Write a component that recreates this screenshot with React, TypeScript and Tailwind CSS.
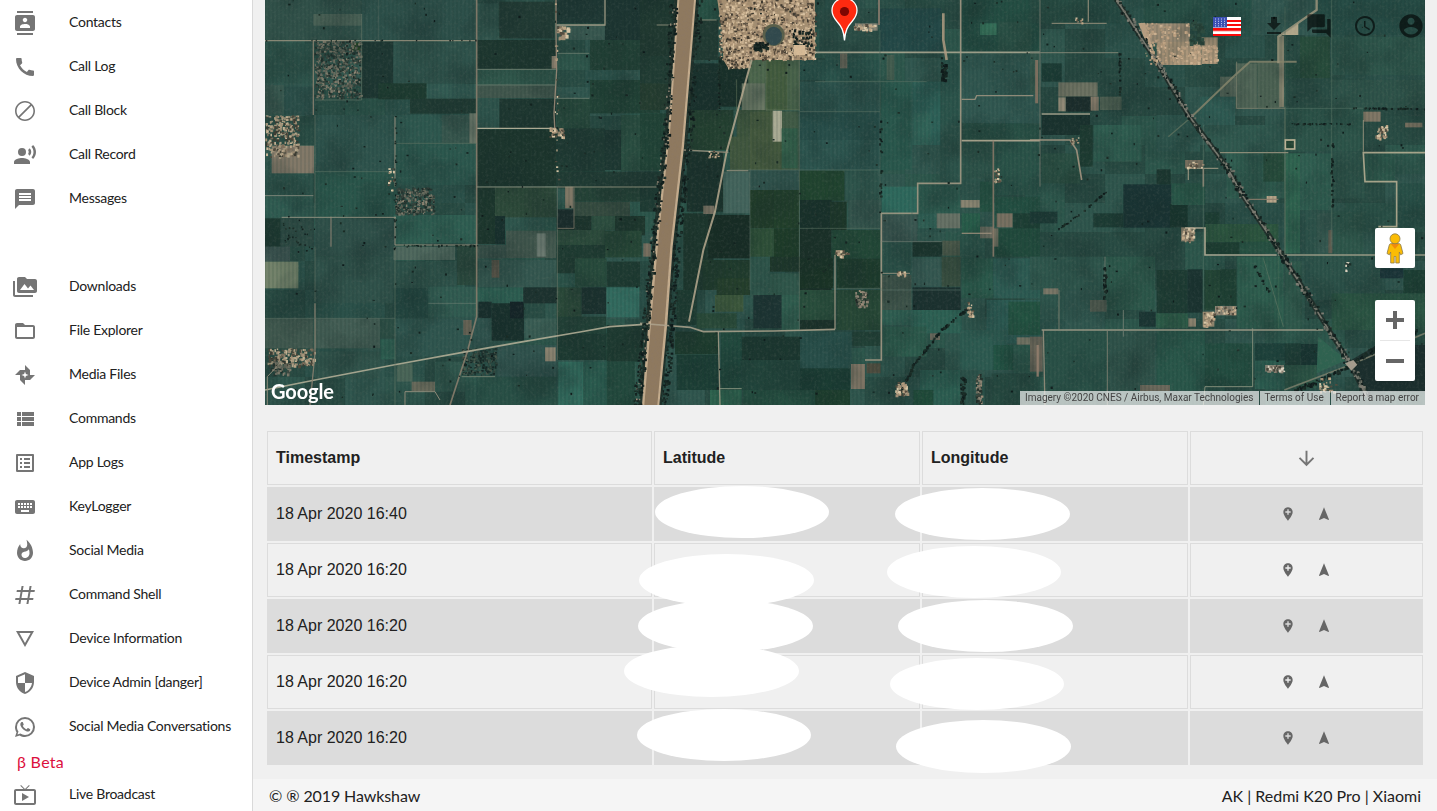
import React from "react";

const ICONS: Record<string, string> = {
  contacts:
    "M20 0H4v2h16V0zM4 24h16v-2H4v2zM20 4H4c-1.1 0-2 .9-2 2v12c0 1.1.9 2 2 2h16c1.1 0 2-.9 2-2V6c0-1.1-.9-2-2-2zm-8 2.75c1.24 0 2.25 1.01 2.25 2.25s-1.01 2.25-2.25 2.25S9.75 10.24 9.75 9 10.76 6.75 12 6.75zM17 17H7v-1.5c0-1.67 3.33-2.5 5-2.5s5 .83 5 2.5V17z",
  call: "M20.01 15.38c-1.23 0-2.42-.2-3.53-.56-.35-.12-.74-.03-1.01.24l-1.57 1.97c-2.83-1.35-5.48-3.9-6.89-6.83l1.95-1.66c.27-.28.35-.67.24-1.02-.37-1.11-.56-2.3-.56-3.53 0-.54-.45-.99-.99-.99H4.19C3.65 3 3 3.24 3 3.99 3 13.28 10.73 21 20.01 21c.71 0 .99-.63.99-1.18v-3.45c0-.54-.45-.99-.99-.99z",
  block:
    "M12 2C6.5 2 2 6.5 2 12s4.5 10 10 10 10-4.5 10-10S17.5 2 12 2zM3.6 12c0-4.6 3.8-8.4 8.4-8.4 2 0 3.9.7 5.3 1.9L5.5 17.3C4.3 15.9 3.6 14 3.6 12zm8.4 8.4c-2 0-3.900-.7-5.300-1.9L18.500 6.700c1.200 1.400 1.900 3.300 1.900 5.300 0 4.600-3.800 8.400-8.400 8.400z",
  voice:
    "M9 5a4 4 0 1 0 0 8 4 4 0 0 0 0-8zM9 15c-2.670 0-8 1.340-8 4v2h16v-2c0-2.660-5.330-4-8-4zm7.760-9.640l-1.680 1.690c.84 1.180.84 2.710 0 3.890l1.680 1.690c2.020-2.020 2.020-5.070 0-7.270zM20.070 2l-1.630 1.630c2.770 3.020 2.770 7.560 0 10.740L20.070 16c3.900-3.890 3.910-9.950 0-14z",
  message:
    "M20 2H4c-1.100 0-1.990.9-1.990 2L2 22l4-4h14c1.100 0 2-.9 2-2V4c0-1.100-.9-2-2-2zm-2 12H6v-2h12v2zm0-3H6V9h12v2zm0-3H6V6h12v2z",
  media:
    "M2 6H0v5h.01L0 20c0 1.100.9 2 2 2h18v-2H2V6zm20-2h-8l-2-2H6c-1.100 0-1.990.9-1.990 2L4 16c0 1.100.9 2 2 2h16c1.100 0 2-.9 2-2V6c0-1.100-.9-2-2-2zM7 15l4.500-6 3.500 4.510 2.500-3.010L21 15H7z",
  folder:
    "M20 6h-8l-2-2H4c-1.100 0-1.990.9-1.990 2L2 18c0 1.100.9 2 2 2h16c1.100 0 2-.9 2-2V8c0-1.100-.9-2-2-2zm0 12H4V8h16v10z",
  pinwheel:
    "M17 12V7L12 2V7H7L2 12H7V17L12 22V17H17L22 12H17M12.880 12.880L12 15.530L11.120 12.880L8.470 12L11.120 11.120L12 8.460L12.880 11.110L15.530 12L12.880 12.880Z",
  list: "M4 14h4v-4H4v4zm0 5h4v-4H4v4zM4 9h4V5H4v4zm5 5h12v-4H9v4zm0 5h12v-4H9v4zM9 5v4h12V5H9z",
  logs: "M19 5v14H5V5h14m1.100-2H3.900c-.5 0-.9.4-.9.9v16.200c0 .4.4.9.9.9h16.200c.4 0 .9-.5.9-.9V3.900c0-.5-.5-.9-.9-.9zM11 7h6v2h-6V7zm0 4h6v2h-6v-2zm0 4h6v2h-6zM7 7h2v2H7zm0 4h2v2H7zm0 4h2v2H7z",
  keyboard:
    "M20 5H4c-1.100 0-1.990.9-1.990 2L2 17c0 1.100.9 2 2 2h16c1.100 0 2-.9 2-2V7c0-1.100-.9-2-2-2zm-9 3h2v2h-2V8zm0 3h2v2h-2v-2zM8 8h2v2H8V8zm0 3h2v2H8v-2zm-1 2H5v-2h2v2zm0-3H5V8h2v2zm9 7H8v-2h8v2zm0-4h-2v-2h2v2zm0-3h-2V8h2v2zm3 3h-2v-2h2v2zm0-3h-2V8h2v2z",
  hot: "M13.500.67s.74 2.650.74 4.800c0 2.060-1.350 3.730-3.410 3.730-2.070 0-3.630-1.670-3.630-3.730l.03-.36C5.210 7.510 4 10.620 4 14c0 4.420 3.580 8 8 8s8-3.580 8-8C20 8.610 17.410 3.800 13.500.67zM11.710 19c-1.780 0-3.220-1.400-3.220-3.140 0-1.620 1.050-2.760 2.810-3.120 1.770-.36 3.600-1.210 4.620-2.580.39 1.290.59 2.650.59 4.040 0 2.650-2.150 4.800-4.800 4.800z",
  hash: "M5.410 21L6.120 17H2.120L2.470 15H6.470L7.530 9H3.530L3.880 7H7.880L8.590 3H10.590L9.880 7H15.880L16.590 3H18.590L17.880 7H21.880L21.530 9H17.530L16.470 15H20.470L20.120 17H16.120L15.410 21H13.410L14.120 17H8.120L7.410 21H5.410M9.530 9L8.470 15H14.470L15.530 9H9.530Z",
  details: "M3 4l9 16 9-16H3zm3.380 2h11.250L12 16 6.380 6z",
  shield:
    "M12 1L3 5v6c0 5.550 3.840 10.740 9 12 5.160-1.260 9-6.450 9-12V5l-9-4zm0 10.990h7c-.53 4.120-3.280 7.790-7 8.940V12H5V6.300l7-3.110v8.800z",
  whatsapp:
    "M16.750 13.960C17 14.090 17.160 14.160 17.210 14.260C17.270 14.370 17.250 14.870 17 15.440C16.800 16 15.760 16.540 15.300 16.560C14.840 16.580 14.830 16.920 12.340 15.830C9.850 14.740 8.350 12.080 8.230 11.910C8.110 11.740 7.270 10.530 7.310 9.300C7.360 8.080 8 7.500 8.260 7.260C8.500 7 8.770 6.970 8.940 7H9.410C9.560 7 9.770 6.940 9.960 7.450L10.650 9.320C10.710 9.450 10.750 9.600 10.660 9.760L10.390 10.170L10 10.590C9.880 10.710 9.740 10.840 9.880 11.090C10 11.350 10.500 12.180 11.200 12.870C12.110 13.750 12.910 14.040 13.150 14.170C13.390 14.310 13.540 14.290 13.690 14.130L14.500 13.190C14.690 12.940 14.850 13 15.080 13.080L16.750 13.960M12 2A10 10 0 0 1 22 12A10 10 0 0 1 12 22C10.030 22 8.200 21.430 6.650 20.450L2 22L3.550 17.350C2.570 15.800 2 13.970 2 12A10 10 0 0 1 12 2M12 4A8 8 0 0 0 4 12C4 13.720 4.540 15.310 5.460 16.610L4.500 19.500L7.390 18.540C8.690 19.460 10.280 20 12 20A8 8 0 0 0 20 12A8 8 0 0 0 12 4Z",
  tv: "M21 6h-7.590l3.290-3.290L16 2l-4 4-4-4-.7.710L10.590 6H3c-1.100 0-2 .89-2 2v12c0 1.100.9 2 2 2h18c1.100 0 2-.9 2-2V8c0-1.110-.9-2-2-2zm0 14H3V8h18v12zM9 10v8l7-4z",
  download: "M19 9h-4V3H9v6H5l7 7 7-7zM5 18v2h14v-2H5z",
  forum:
    "M21 6h-2v9H6v2c0 .55.45 1 1 1h11l4 4V7c0-.55-.45-1-1-1zm-4 6V3c0-.55-.45-1-1-1H3c-.55 0-1 .45-1 1v14l4-4h10c.55 0 1-.45 1-1z",
  clock:
    "M11.990 2C6.470 2 2 6.480 2 12s4.470 10 9.990 10C17.520 22 22 17.520 22 12S17.520 2 11.990 2zM12 20c-4.420 0-8-3.580-8-8s3.580-8 8-8 8 3.580 8 8-3.580 8-8 8zM12.500 7H11v6l5.250 3.150.75-1.230-4.500-2.670z",
  account:
    "M12 2C6.480 2 2 6.480 2 12s4.480 10 10 10 10-4.480 10-10S17.520 2 12 2zm0 3c1.660 0 3 1.340 3 3s-1.340 3-3 3-3-1.340-3-3 1.340-3 3-3zm0 14.200c-2.500 0-4.710-1.280-6-3.220.03-1.990 4-3.080 6-3.080 1.990 0 5.970 1.090 6 3.080-1.290 1.940-3.500 3.220-6 3.220z",
  down: "M20 12l-1.410-1.410L13 16.170V4h-2v12.170l-5.580-5.590L4 12l8 8 8-8z",
  addLocation:
    "M12 2C8.140 2 5 5.140 5 9c0 5.250 7 13 7 13s7-7.750 7-13c0-3.860-3.140-7-7-7zm4 8h-3v3h-2v-3H8V8h3V5h2v3h3v2z",
  navigation: "M12 2L4.500 20.290l.71.71L12 18l6.790 3 .71-.71z",
};

function Icon({ name, className }: { name: string; className?: string }) {
  return (
    <svg viewBox="0 0 24 24" fill="currentColor" className={className ?? "size-6"}>
      <path d={ICONS[name]} />
    </svg>
  );
}

const NAV_TOP: [string, string][] = [
  ["contacts", "Contacts"],
  ["call", "Call Log"],
  ["block", "Call Block"],
  ["voice", "Call Record"],
  ["message", "Messages"],
];

const NAV_MAIN: [string, string][] = [
  ["media", "Downloads"],
  ["folder", "File Explorer"],
  ["pinwheel", "Media Files"],
  ["list", "Commands"],
  ["logs", "App Logs"],
  ["keyboard", "KeyLogger"],
  ["hot", "Social Media"],
  ["hash", "Command Shell"],
  ["details", "Device Information"],
  ["shield", "Device Admin [danger]"],
  ["whatsapp", "Social Media Conversations"],
];

function NavItem({ icon, label }: { icon: string; label: string }) {
  return (
    <a className="flex h-11 shrink-0 items-center pl-[13px] text-[#757575]">
      <Icon name={icon} />
      <span className="ml-8 whitespace-nowrap pb-0.5 text-sm tracking-[-0.26px] text-[#212121]">{label}</span>
    </a>
  );
}

function Sidebar() {
  return (
    <nav className="flex w-[253px] shrink-0 flex-col overflow-hidden border-r border-[#d9d9d9] bg-white pt-px">
      {NAV_TOP.map(([i, l]) => (
        <NavItem key={l} icon={i} label={l} />
      ))}
      <div className="h-11 shrink-0" />
      {NAV_MAIN.map(([i, l]) => (
        <NavItem key={l} icon={i} label={l} />
      ))}
      <div className="flex h-6 shrink-0 items-center pl-[17px] pt-0.5 text-base tracking-[0.3px] text-[#dc0f3c]">β Beta</div>
      <NavItem icon="tv" label="Live Broadcast" />
    </nav>
  );
}

/* ---------- satellite imagery ---------- */

function makeRandom(seed: number) {
  let s = seed;
  return () => {
    s = (s * 1664525 + 1013904223) % 4294967296;
    return s / 4294967296;
  };
}

type Patch = [number, number, number, number, string];

// Three survey sheets, each in its own 3x coordinate space.
const WEST: Patch[] = [
  [15, 0, 290, 120, "#2d5249"], [305, 0, 345, 120, "#28514b"], [650, 10, 65, 110, "#2e5a50"],
  [718, 5, 165, 110, "#1d3a31"], [885, 0, 150, 70, "#1a3631"], [1035, 0, 165, 190, "#17332e"],
  [160, 42, 145, 35, "#4c6657"], [305, 125, 95, 170, "#18352f"], [400, 125, 250, 125, "#2b564d"],
  [650, 120, 240, 88, "#19352c"], [890, 75, 145, 45, "#365a51"], [890, 160, 100, 50, "#28594c"], [990, 120, 210, 90, "#1d4134"],
  [650, 208, 240, 46, "#2b5a4c"], [650, 256, 240, 38, "#41594d"], [355, 250, 145, 48, "#193a2c"],
  [500, 252, 150, 45, "#2e6055"], [450, 296, 200, 45, "#1b3a30"], [650, 296, 70, 90, "#28564c"], [718, 296, 170, 88, "#19352d"],
  [890, 296, 100, 90, "#234b3a"], [990, 240, 210, 100, "#1c4233"], [15, 130, 145, 120, "#28574c"], [15, 255, 57, 88, "#365a50"],
  [72, 260, 93, 85, "#26504a"], [165, 345, 240, 170, "#2a574e"], [405, 345, 245, 85, "#285c50"], [545, 345, 105, 85, "#34584e"], [405, 430, 245, 125, "#265c4f"],
  [650, 388, 240, 170, "#17342a"], [890, 385, 145, 130, "#1b3b32"], [1035, 390, 48, 120, "#19362f"], [1083, 345, 117, 168, "#25503f"],
  [165, 515, 240, 135, "#24594c"], [15, 520, 145, 65, "#28584d"], [15, 588, 145, 65, "#2a6052"], [400, 645, 250, 85, "#286354"],
  [650, 562, 55, 170, "#173528"], [705, 562, 185, 90, "#2a4a36"], [890, 515, 300, 50, "#1c3b31"], [940, 605, 170, 45, "#344c3d"], [940, 560, 250, 45, "#1f4133"],
  [705, 648, 30, 85, "#132d2a"], [738, 692, 150, 82, "#455c4f"], [890, 648, 105, 42, "#183128"], [995, 648, 70, 42, "#28503d"], [1065, 648, 90, 58, "#183528"],
  [890, 690, 145, 45, "#284c38"], [1035, 692, 110, 80, "#234833"], [15, 655, 47, 85, "#17362d"], [62, 655, 100, 85, "#284a42"],
  [15, 740, 75, 45, "#3b5550"], [15, 785, 100, 80, "#7d8b6b"], [165, 655, 240, 115, "#2b5149"], [165, 770, 240, 140, "#2c554c"], [400, 740, 185, 40, "#516e60"],
  [590, 735, 60, 120, "#26493b"], [400, 785, 190, 80, "#2a554b"], [650, 735, 90, 40, "#3b554c"], [655, 780, 235, 82, "#315a51"],
  [695, 780, 23, 53, "#6d5a49"], [890, 735, 145, 85, "#1a3a2e"], [945, 775, 95, 85, "#234d39"], [1040, 785, 100, 75, "#18382e"], [400, 865, 105, 90, "#1e4a42"], [505, 860, 145, 90, "#2c6053"],
  [650, 862, 140, 48, "#266252"], [790, 862, 102, 48, "#182f2c"], [890, 862, 75, 90, "#274b36"], [965, 862, 73, 80, "#172f2c"], [1040, 862, 98, 90, "#2b7162"],
  [655, 905, 40, 50, "#142c2a"], [695, 910, 97, 112, "#142e29"], [750, 905, 40, 50, "#101f24"], [793, 955, 95, 60, "#386257"], [893, 950, 145, 50, "#1e4336"],
  [15, 955, 145, 90, "#405a4e"], [165, 955, 195, 90, "#436156"], [360, 955, 45, 60, "#285146"], [362, 1018, 45, 60, "#2a6b58"],
  [405, 955, 245, 115, "#2b5950"], [610, 960, 25, 45, "#706553"], [640, 955, 50, 85, "#2f5c55"], [890, 1000, 150, 80, "#19392f"], [1040, 975, 110, 110, "#18382d"],
  [165, 1055, 195, 80, "#2d574d"], [410, 1090, 48, 55, "#4a6a59"], [455, 1145, 70, 28, "#746f5c"], [525, 1085, 90, 90, "#2b5b4e"],
  [710, 1035, 180, 140, "#2f5954"], [895, 1085, 75, 130, "#2c7765"], [970, 1085, 75, 130, "#246050"], [1040, 1085, 85, 130, "#1c4a3b"], [650, 1130, 240, 85, "#235246"],
  [35, 437, 127, 83, "#927f69"], [915, 560, 25, 65, "#8e7e67"], [855, 1042, 32, 42, "#a39076"], [875, 168, 14, 38, "#a38c74"],
  [830, 700, 27, 70, "#7a887b"], [275, 128, 26, 24, "#244b18"], [1150, 730, 22, 40, "#86745f"], [628, 340, 22, 90, "#6d7a68"], [893, 628, 48, 58, "#16292a"],
];

const CENTER: Patch[] = [
  [0, 0, 105, 60, "#1a362d"], [0, 60, 105, 110, "#1c372d"], [0, 170, 90, 80, "#1c3b30"], [0, 250, 85, 80, "#213c2c"], [0, 340, 80, 170, "#1c4635"], [0, 515, 60, 120, "#1a3930"],
  [160, 0, 75, 60, "#205444"], [155, 60, 80, 120, "#1d3930"], [150, 190, 85, 140, "#152f29"], [235, 170, 90, 150, "#142d25"], [150, 330, 130, 120, "#1f402c"], [140, 455, 110, 180, "#173028"],
  [130, 640, 90, 230, "#193529"], [110, 870, 60, 105, "#19392e"], [340, 180, 140, 150, "#4b6747"], [325, 180, 50, 90, "#56724e"], [305, 250, 70, 80, "#738066"], [378, 180, 63, 150, "#455f38"],
  [290, 330, 110, 90, "#3d5637"], [270, 410, 120, 100, "#415939"], [330, 335, 145, 175, "#465c38"], [427, 335, 48, 175, "#415e43"],
  [398, 332, 28, 93, "#bdb99a"], [425, 385, 48, 120, "#2d6247"], [480, 180, 240, 60, "#24564c"], [600, 160, 22, 45, "#776d5c"], [740, 165, 23, 75, "#44604f"],
  [480, 245, 240, 90, "#285850"], [480, 335, 240, 85, "#23514d"], [480, 420, 240, 90, "#275951"], [722, 245, 95, 265, "#235c4e"], [817, 245, 85, 190, "#26665a"], [817, 340, 55, 95, "#2b6a5c"],
  [537, 25, 180, 130, "#264f46"], [720, 25, 185, 130, "#1e4b49"], [902, 165, 60, 210, "#25574c"], [902, 375, 60, 175, "#27574c"],
  [250, 515, 80, 125, "#426960"], [330, 510, 150, 60, "#2b534c"], [330, 570, 72, 115, "#1c3b23"], [402, 570, 75, 115, "#1d3f24"], [478, 512, 135, 90, "#1b4529"],
  [480, 600, 95, 90, "#142e26"], [570, 605, 50, 85, "#183524"], [615, 515, 105, 85, "#2a584d"], [625, 600, 95, 85, "#31574e"], [480, 690, 95, 180, "#162e23"], [575, 690, 145, 85, "#1c4833"],
  [205, 645, 125, 130, "#13291f"], [330, 685, 75, 85, "#2a5132"], [402, 685, 75, 90, "#193a22"], [330, 775, 60, 110, "#2b5b4d"], [390, 770, 90, 45, "#1a3525"], [390, 820, 90, 65, "#2b5b4a"],
  [190, 780, 140, 90, "#1b3a27"], [230, 835, 100, 50, "#203e25"], [225, 885, 85, 50, "#3c5b36"], [170, 940, 120, 45, "#254c35"], [340, 885, 85, 100, "#183231"], [425, 885, 53, 105, "#2a614e"],
  [480, 870, 105, 90, "#245038"], [480, 960, 105, 30, "#172f25"], [590, 775, 130, 90, "#183b27"], [590, 870, 130, 120, "#234931"], [480, 775, 100, 90, "#15301f"],
  [725, 560, 107, 80, "#267060"], [835, 560, 125, 80, "#275f50"], [725, 645, 107, 80, "#395952"], [835, 640, 125, 45, "#286456"], [890, 640, 70, 45, "#6f7868"],
  [725, 725, 90, 95, "#265549"], [817, 725, 90, 45, "#15312a"], [907, 722, 53, 45, "#4c5946"], [817, 775, 90, 85, "#315b53"], [905, 770, 57, 90, "#364e3c"],
  [725, 825, 90, 105, "#3e5548"], [817, 862, 145, 68, "#172e2d"], [725, 930, 90, 45, "#286252"], [815, 930, 150, 70, "#266656"], [730, 980, 130, 90, "#27614e"],
  [965, 160, 235, 120, "#2b5950"], [965, 280, 235, 90, "#2c5c52"], [970, 370, 230, 50, "#215245"], [965, 425, 95, 110, "#275548"], [1062, 425, 138, 160, "#245648"],
  [965, 0, 235, 155, "#1d5043"], [1020, 70, 50, 35, "#2d7658"], [1075, 65, 100, 90, "#255345"], [962, 600, 57, 23, "#998c73"], [1020, 545, 40, 90, "#1d5440"], [1065, 590, 135, 90, "#1c5140"],
  [965, 640, 55, 60, "#1f6048"], [1020, 680, 40, 35, "#777262"], [1120, 640, 80, 60, "#163e32"], [1065, 685, 135, 85, "#1a4c39"], [965, 775, 95, 120, "#245d4b"], [1060, 775, 140, 120, "#276055"],
  [1040, 900, 160, 130, "#266056"], [960, 990, 140, 120, "#275f53"], [1105, 905, 95, 100, "#1c5740"], [1130, 1012, 60, 22, "#968a72"], [1060, 1035, 60, 75, "#1b5743"], [1120, 1035, 80, 90, "#286150"],
  [105, 995, 130, 68, "#193b29"], [110, 1065, 130, 105, "#153e33"], [243, 995, 62, 175, "#1a4b3c"], [305, 1010, 175, 90, "#16362d"], [305, 1080, 175, 90, "#1c463b"], [480, 995, 155, 110, "#23514c"],
  [637, 995, 85, 43, "#1d4135"], [480, 1105, 150, 65, "#143d31"], [210, 1170, 95, 45, "#26684e"], [310, 1170, 215, 45, "#1d4f3d"], [525, 1170, 105, 45, "#18402a"],
  [633, 1092, 42, 75, "#907d67"], [680, 1090, 42, 30, "#534c3b"], [840, 1110, 120, 105, "#256253"], [820, 1170, 60, 45, "#194e37"], [1055, 1120, 145, 95, "#224e43"],
  [190, 617, 33, 25, "#9a856e"], [1070, 640, 48, 42, "#857561"], [645, 70, 68, 22, "#97907b"], [1060, 685, 15, 55, "#77725f"], [870, 1000, 30, 20, "#70695a"],
];

const EAST: Patch[] = [
  [0, 0, 175, 70, "#214e43"], [175, 0, 95, 70, "#1f4a41"], [340, 0, 175, 65, "#225145"], [515, 0, 150, 110, "#22564b"], [665, 0, 195, 105, "#2f5d54"], [862, 0, 323, 105, "#204f46"],
  [345, 70, 135, 60, "#bb9d7b"], [380, 125, 135, 70, "#c6a37d"], [515, 112, 48, 80, "#c2a07a"], [0, 160, 30, 120, "#30594c"], [35, 190, 60, 55, "#153a32"],
  [85, 247, 118, 43, "#777762"], [85, 292, 22, 42, "#a3937a"], [108, 290, 77, 45, "#172a27"], [182, 290, 24, 42, "#927e68"], [210, 290, 65, 40, "#566855"], [35, 345, 145, 60, "#15302c"], [180, 335, 95, 40, "#234d44"],
  [150, 375, 38, 125, "#193c2f"], [35, 460, 115, 90, "#265443"], [190, 375, 145, 110, "#2a6352"], [380, 345, 130, 110, "#2a5c50"], [510, 290, 105, 90, "#2c665a"],
  [617, 190, 65, 137, "#556c58"], [682, 187, 70, 137, "#4e6653"], [570, 230, 48, 60, "#637460"], [748, 107, 14, 215, "#948b70"], [810, 110, 90, 125, "#234f38"], [905, 110, 280, 115, "#28594c"], [765, 190, 45, 130, "#235443"],
  [765, 235, 235, 90, "#254f45"], [765, 325, 235, 130, "#27584b"], [905, 240, 280, 85, "#295649"], [1000, 335, 52, 30, "#907d66"], [1125, 368, 52, 14, "#8f7d65"],
  [525, 375, 240, 80, "#2b5d50"], [590, 460, 175, 135, "#2b6452"], [700, 460, 62, 85, "#22503a"], [765, 460, 45, 300, "#286a50"], [810, 460, 95, 170, "#2a6352"], [905, 455, 100, 140, "#275548"],
  [1005, 460, 90, 85, "#28604f"], [1100, 550, 85, 130, "#215247"], [380, 508, 42, 45, "#15342c"], [280, 553, 143, 130, "#143233"], [190, 640, 90, 42, "#163a30"], [420, 612, 53, 70, "#123129"], [425, 550, 100, 65, "#235b47"],
  [0, 635, 82, 35, "#163833"], [525, 637, 43, 35, "#174133"], [525, 672, 220, 55, "#275b3c"], [525, 727, 103, 35, "#163c2d"], [630, 725, 120, 35, "#205440"],
  [860, 638, 50, 120, "#315c51"], [895, 690, 12, 70, "#665f4f"], [910, 635, 90, 125, "#285b4c"], [0, 770, 220, 100, "#2a5a4e"], [225, 770, 150, 160, "#265a49"], [380, 810, 92, 130, "#193b30"],
  [472, 808, 46, 130, "#15302e"], [523, 810, 47, 120, "#1e4933"], [570, 808, 50, 108, "#194330"], [327, 935, 50, 45, "#153431"], [378, 940, 95, 45, "#286649"], [620, 770, 140, 215, "#28634f"],
  [765, 785, 50, 200, "#2a5d4c"], [840, 770, 105, 130, "#27564b"], [945, 770, 105, 110, "#265348"], [1120, 810, 65, 85, "#164032"], [1050, 805, 70, 30, "#15333a"], [905, 880, 280, 110, "#265b43"],
  [0, 1010, 38, 105, "#786b5b"], [45, 990, 185, 225, "#245447"], [235, 990, 140, 180, "#2b554b"], [380, 990, 145, 180, "#235b4b"], [525, 1030, 145, 130, "#1c4f3f"], [675, 1030, 90, 52, "#17413a"],
  [675, 1082, 90, 85, "#256151"], [765, 1030, 47, 65, "#193e35"], [812, 1032, 50, 63, "#123531"], [765, 1095, 95, 70, "#275c46"], [180, 900, 50, 35, "#616757"], [330, 1155, 90, 18, "#776d5c"], [40, 865, 45, 18, "#897e69"], [465, 480, 55, 25, "#927d65"],
  [453, 682, 40, 42, "#a18b6f"], [710, 588, 30, 20, "#d1b28e"], [555, 918, 65, 28, "#a09079"], [475, 955, 23, 25, "#a08b71"], [518, 935, 35, 45, "#bca07c"], [705, 1095, 57, 20, "#a39883"],
];

type Road = [string, string, number];
const WEST_ROADS: Road[] = [
  ["M15 122H650", "#99927a", 4], ["M650 0V950L622 1055L570 1215", "#8f806b", 5], ["M160 120V345", "#8f846e", 4], ["M165 345V650M165 740V905", "#63705f", 2],
  ["M65 652H408", "#9e9984", 3], ["M15 587H160", "#8a917e", 3], ["M405 350V560M405 650V735H650", "#a7957d", 3], ["M652 385H890", "#c8bc9d", 4],
  ["M650 561H1190", "#95937b", 3], ["M888 0V100L890 210L882 340L885 400", "#a38d75", 4], ["M890 75H1035V0", "#afa68a", 4], ["M892 560V1080", "#79806d", 2],
  ["M885 295H988M893 160H988", "#879580", 2], ["M15 1170L165 1140L400 1095L620 1055L790 1025L960 996L1050 980L1200 970", "#bbb497", 5], ["M165 910V1060L150 1215", "#8e826d", 4],
  ["M650 208H888M650 255H888", "#718371", 3], ["M213 650V740", "#a18e78", 3], ["M15 955H405", "#566f61", 2], ["M505 910H650", "#6d8272", 2], ["M405 740V1215", "#637260", 2],
  ["M605 1130H705", "#7a8872", 3], ["M22 1215V1130L60 1090", "#9b917a", 3], ["M305 42V300H165", "#6a7d6b", 2], ["M403 430H650", "#617461", 2], ["M355 0V120", "#50695c", 1.500], ["M435 1215V1175H525L540 1200", "#a39680", 3], ["M942 560V685H893", "#76705e", 3], ["M165 515H400", "#5d7767", 2],
];
const CENTER_ROADS: Road[] = [
  ["M335 180L325 215L260 455L225 635L190 750L147 965", "#baa98b", 6], ["M0 970L100 978L150 982L190 995L400 993L585 988", "#b0a58a", 5], ["M585 988V765", "#a59980", 4],
  ["M525 157H1200", "#b2ab92", 5], ["M962 0V550H833V640H724V1080H675", "#ab9e84", 5], ["M965 422H1200", "#bdb093", 5], ["M1060 422V770", "#8f7b66", 5],
  ["M910 40V120L920 180", "#b49c7c", 8], ["M717 0V75", "#8c7a68", 6], ["M130 450L265 457M260 512H325", "#9e927a", 4], ["M478 180V990", "#5d705d", 2], ["M330 505V870", "#577064", 2],
  ["M235 995L240 1215", "#a89e84", 4], ["M235 1166H305", "#95a084", 3], ["M525 245H860M480 335H720", "#5c7464", 2], ["M720 90V640", "#47665a", 2], ["M265 510H720", "#5b7768", 2],
  ["M965 298H1005L1010 287H1180", "#a3957e", 4], ["M965 700H1055", "#9f8e77", 4], ["M725 820H810", "#9e947f", 3], ["M480 685H720M590 865H725", "#587160", 2], ["M722 725H905", "#7f877b", 2], ["M816 165V1000", "#386557", 1.500],
  ["M1190 180V310", "#8e745f", 9], ["M1193 1035V1130", "#9a806b", 7], ["M290 238V330M378 180V330H480", "#617957", 2], ["M50 75H100M180 60H230", "#93937a", 3], ["M722 870H962", "#59776a", 2],
];
const EAST_ROADS: Road[] = [
  ["M0 158H265", "#78816e", 4], ["M30 0V560", "#74796a", 3], ["M480 355L610 230L660 185H800", "#858466", 6], ["M415 410L480 355", "#58705a", 4], ["M745 190V110L860 30V0", "#9e9578", 7],
  ["M765 320V770", "#687d65", 3], ["M570 458H775M565 505H475V540", "#9c967d", 4], ["M0 420H120L140 450L155 540", "#ae9980", 5], ["M35 342H180", "#b1a98d", 4], ["M465 684H525V765H740", "#c0b396", 5],
  ["M745 765H1185", "#aaa588", 5], ["M645 598H745", "#8e7e69", 4], ["M1185 458H1000L1005 545H1100V680H1045", "#c0b492", 5], ["M1000 360V455", "#9e967c", 3], ["M35 990H880", "#aaa288", 5], ["M40 990L45 1215", "#9d927b", 4],
  ["M232 990V1215M87 870V990", "#7e7f6d", 3], ["M668 985V1160H525L520 1215", "#919b80", 3], ["M65 70H230M175 65V0", "#8f8b73", 4], ["M765 20V320M905 0V740", "#50705e", 2], ["M765 325H1000M520 375V935", "#517463", 2],
  ["M280 930V1010M225 770V880", "#718070", 3], ["M745 770V985", "#3a6b50", 2], ["M520 505V560", "#938a74", 5], ["M763 1170L960 1095L1185 1000", "#7b8068", 5], ["M620 185V325H765", "#798068", 3], ["M700 775L760 980", "#4c705a", 3],
];

function Rects({ data }: { data: Patch[] }) {
  return (
    <>
      {data.map(([x, y, w, h, c], i) => (
        <rect key={i} x={x} y={y} width={w} height={h} fill={c} />
      ))}
    </>
  );
}

function Roads({ data }: { data: Road[] }) {
  return (
    <>
      {data.map(([d, c, w], i) => (
        <path key={i} d={d} stroke={c} strokeWidth={w} fill="none" strokeOpacity={0.85} />
      ))}
    </>
  );
}

function speckle(seed: number, x: number, y: number, w: number, h: number, n: number, colors: string[], min: number, max: number) {
  const r = makeRandom(seed);
  const out: Patch[] = [];
  for (let i = 0; i < n; i++) {
    out.push([x + r() * w, y + r() * h, min + r() * (max - min), min + r() * (max - min), colors[Math.floor(r() * colors.length)]]);
  }
  return out;
}

function alongLine(seed: number, pts: [number, number][], n: number, spread: number, colors: string[], min: number, max: number) {
  const r = makeRandom(seed);
  const out: Patch[] = [];
  for (let s = 0; s < pts.length - 1; s++) {
    for (let i = 0; i < n; i++) {
      const t = r();
      out.push([
        pts[s][0] + (pts[s + 1][0] - pts[s][0]) * t + (r() - 0.5) * spread,
        pts[s][1] + (pts[s + 1][1] - pts[s][1]) * t + (r() - 0.5) * spread * 0.4,
        min + r() * (max - min),
        min + r() * (max - min),
        colors[Math.floor(r() * colors.length)],
      ]);
    }
  }
  return out;
}

const TREE = ["#10231f", "#172c25", "#0d1c1b"];
const GROVE = ["#1d2b26", "#8d826f", "#a08e76", "#3b463c", "#22332c", "#6e6b5a"];
const TOWN = ["#574a39", "#d2b48d", "#bd9d79", "#403a2e", "#e0c39b", "#8d745a", "#ceb089"];
const BRIGHT = ["#dcc7a0", "#c3a680", "#a48e70", "#554c3c"];

const FIELDS: Patch[] = (() => {
  const r = makeRandom(77);
  const palette = ["#26544a", "#29594e", "#244e44", "#2c5b50", "#234b41", "#275a4d"];
  const out: Patch[] = [];
  for (let x = 265; x < 1425; x += 40) {
    for (let y = 0; y < 405; y += 29) out.push([x, y, 40, 29, palette[Math.floor(r() * palette.length)]]);
  }
  return out;
})();

function Satellite() {
  return (
    <svg viewBox="265 0 1160 405" className="block h-[405px] w-[1160px]">
      <defs>
        <filter id="grain" x="0" y="0" width="100%" height="100%" colorInterpolationFilters="sRGB">
          <feTurbulence type="fractalNoise" baseFrequency="0.35" numOctaves="3" seed="4" />
          <feColorMatrix values="0 0 0 0 0.5  0 0 0 0 0.52  0 0 0 0 0.48  1.600 0 0 0 -0.72" />
        </filter>
        <filter id="mottle" x="0" y="0" width="100%" height="100%" colorInterpolationFilters="sRGB">
          <feTurbulence type="fractalNoise" baseFrequency="0.025" numOctaves="3" seed="9" />
          <feColorMatrix values="0 0 0 0 0.08  0 0 0 0 0.17  0 0 0 0 0.16  2 0 0 0 -0.8" />
        </filter>
        <filter id="soften" colorInterpolationFilters="sRGB">
          <feGaussianBlur stdDeviation="0.5" />
        </filter>
        <filter id="ragged" x="-5%" y="-5%" width="110%" height="110%">
          <feTurbulence type="fractalNoise" baseFrequency="0.15" numOctaves="2" seed="2" />
          <feDisplacementMap in="SourceGraphic" scale="2.200" />
        </filter>
        <pattern id="rows" width="4" height="4" patternUnits="userSpaceOnUse">
          <path d="M1 0V4" stroke="#0c2824" strokeWidth="1" strokeOpacity="0.2" />
        </pattern>
      </defs>
      <g className="saturate-[0.84]">
        <g filter="url(#soften)">
          <Rects data={FIELDS} />
          <g transform="translate(260 0) scale(.33333)">
            <Rects data={WEST} />
            <Rects data={speckle(3, 163, 122, 138, 172, 760, GROVE, 3, 8)} />
            <Rects data={speckle(4, 15, 345, 98, 125, 260, TOWN, 4, 9)} />
            <Rects data={speckle(5, 405, 562, 115, 80, 340, GROVE, 3, 8)} />
            <Rects data={speckle(6, 22, 1045, 142, 50, 170, TOWN, 4, 10)} />
            <Rects data={speckle(61, 30, 1080, 60, 42, 60, GROVE, 4, 9)} />
            <Rects data={speckle(7, 605, 1045, 102, 80, 270, ["#1b332d", "#33483d", "#10211f", "#52614f"], 3, 8)} />
          </g>
          <g transform="translate(640 0) scale(.33333)">
            <Rects data={CENTER} />
          </g>
          <g transform="translate(1030 0) scale(.33333)">
            <Rects data={EAST} />
          </g>
        </g>
        <rect x="265" y="0" width="1160" height="405" fill="#26504a" opacity="0.12" />
        <rect x="265" y="0" width="1160" height="405" fill="url(#rows)" />
        <rect x="265" y="0" width="1160" height="405" filter="url(#mottle)" opacity="0.45" />
        <g filter="url(#soften)">
          <g transform="translate(260 0) scale(.33333)">
            <Roads data={WEST_ROADS} />
            <Rects data={speckle(11, 20, 0, 1130, 1190, 170, TREE, 3, 7)} />
            <Rects data={speckle(8, 890, 78, 32, 34, 26, BRIGHT, 5, 12)} />
            <Rects data={speckle(9, 868, 382, 42, 30, 30, BRIGHT, 5, 10)} />
            <Rects data={speckle(10, 382, 500, 20, 70, 14, BRIGHT, 4, 8)} />
            <Rects data={alongLine(12, [[15, 120], [650, 120]], 16, 6, TREE, 3, 6)} />
            <Rects data={alongLine(13, [[405, 735], [650, 735]], 24, 6, TREE, 3, 7)} />
            <Rects data={alongLine(14, [[405, 345], [403, 900]], 25, 6, TREE, 3, 7)} />
            <Rects data={alongLine(15, [[100, 655], [110, 740]], 30, 100, TREE, 3, 6)} />
            <Rects data={alongLine(16, [[888, 0], [890, 560]], 24, 10, BRIGHT, 3, 7)} />
          </g>
          <g transform="translate(640 0) scale(.33333)">
            <path d="M232 0H525V180H330L330 205H265L250 180L245 90Z" fill="#a98e6b" />
            <Rects data={speckle(21, 236, -3, 288, 180, 1150, TOWN, 3, 9)} />
            <Rects data={speckle(22, 260, 170, 68, 32, 90, TOWN, 4, 8)} />
            <circle cx="401" cy="105" r="33" fill="#596047" />
            <ellipse cx="401" cy="108" rx="25" ry="28" fill="#2d4a4f" />
            <Rects data={speckle(23, 340, 125, 40, 25, 40, TREE, 5, 10)} />
            <Rects data={speckle(24, 455, 85, 60, 65, 45, TREE, 4, 9)} />
            <rect x="460" y="135" width="35" height="30" fill="#dbb98f" />
            <g filter="url(#ragged)">
              <path d="M109 0L81 400L47 700L24 970L5 1215H58L80 970L100 740L134 440L170 0Z" fill="#1b322c" stroke="#1b322c" strokeWidth="14" />
              <path d="M112 0L84 400L50 700L25 970L6 1215H58L82 970L98 740L132 440L168 0Z" fill="#c8ab87" />
            </g>
            <path d="M118 0L90 400L57 700L33 970L13 1215H52L74 970L91 740L125 440L162 0Z" fill="#92785a" />
            <Roads data={CENTER_ROADS} />
            <Rects data={alongLine(30, [[98, 0], [76, 400], [40, 700], [12, 1000], [-12, 1215]], 80, 22, TREE, 4, 9)} />
            <Rects data={alongLine(31, [[178, 0], [144, 440], [108, 740], [92, 970], [72, 1215]], 75, 18, TREE, 4, 9)} />
            <Rects data={alongLine(35, [[98, 0], [76, 400], [40, 700], [12, 1000], [-12, 1215]], 22, 18, GROVE, 3, 7)} />
            <Rects data={speckle(32, 190, 0, 990, 1190, 140, TREE, 3, 7)} />
            <Rects data={alongLine(33, [[980, 925], [900, 990], [820, 1090], [780, 1180]], 36, 7, TREE, 4, 8)} />
            <Rects data={speckle(34, 765, 1145, 35, 38, 45, BRIGHT, 4, 10)} />
            <Rects data={speckle(36, 585, 748, 35, 22, 24, BRIGHT, 5, 10)} />
            <Rects data={speckle(37, 645, 870, 35, 50, 65, GROVE, 4, 9)} />
            <Rects data={speckle(38, 1007, 1120, 16, 90, 65, GROVE, 4, 9)} />
            <Rects data={speckle(39, 960, 1130, 14, 80, 45, TREE, 4, 8)} />
            <Rects data={speckle(40, 902, 185, 14, 55, 36, TREE, 5, 10)} />
            <Rects data={speckle(41, 980, 905, 18, 42, 25, BRIGHT, 4, 8)} />
            <Rects data={speckle(42, 770, 812, 25, 14, 16, BRIGHT, 4, 8)} />
            <Rects data={speckle(43, 1060, 505, 18, 42, 22, BRIGHT, 4, 8)} />
            <Rects data={speckle(44, 640, 68, 65, 22, 26, BRIGHT, 4, 10)} />
            <Rects data={alongLine(45, [[720, 340], [720, 640]], 22, 6, TREE, 4, 8)} />
            <Rects data={alongLine(46, [[235, 180], [235, 330]], 30, 5, TREE, 3, 6)} />
            <Rects data={speckle(47, 205, 450, 28, 20, 16, BRIGHT, 3, 7)} />
          </g>
          <g transform="translate(1030 0) scale(.33333)">
            <path d="M325 70L345 68L385 195L372 190Z" fill="#bb9d7b" />
            <path d="M755 105L805 68V105Z" fill="#b3a685" />
            <path d="M955 1085L1040 1035H1185V1175H1000Z" fill="#182f2d" />
            <path d="M865 1010L950 1080L860 1120Z" fill="#28644f" />
            <Roads data={EAST_ROADS} />
            <path d="M260 0L380 185L475 345L590 500L640 590L740 740L810 850L890 980L960 1090L1010 1190" stroke="#1f302b" strokeWidth="15" fill="none" />
            <path d="M260 0L380 185L475 345L590 500L640 590L740 740L810 850L890 980L960 1090L1010 1190" stroke="#77776c" strokeWidth="5" fill="none" />
            <Rects data={alongLine(50, [[260, 0], [380, 185], [475, 345], [590, 500], [640, 590], [740, 740], [810, 850], [890, 980], [960, 1090], [1010, 1190]], 42, 22, [...TREE, "#6a6e63", "#7d7c70"], 4, 9)} />
            <Rects data={alongLine(51, [[1185, 980], [1030, 1045], [960, 1095], [860, 1140], [790, 1170]], 36, 18, TREE, 4, 9)} />
            <Rects data={speckle(52, 15, 0, 1165, 1170, 140, TREE, 3, 7)} />
            <Rects data={alongLine(53, [[225, 575], [160, 630], [85, 685]], 16, 6, TREE, 4, 7)} />
            <Rects data={alongLine(54, [[670, 790], [720, 885]], 22, 8, TREE, 3, 7)} />
            <Rects data={alongLine(55, [[960, 322], [1185, 325]], 36, 6, TREE, 4, 7)} />
            <Rects data={alongLine(56, [[775, 370], [960, 370]], 30, 6, TREE, 3, 7)} />
            <Rects data={alongLine(57, [[907, 430], [903, 630]], 28, 7, TREE, 4, 7)} />
            <Rects data={alongLine(58, [[223, 800], [223, 890]], 24, 9, TREE, 4, 9)} />
            <Rects data={alongLine(59, [[267, 160], [267, 290]], 24, 4, TREE, 4, 7)} />
            <Rects data={speckle(60, 1036, 375, 32, 38, 42, BRIGHT, 4, 10)} />
            <Rects data={speckle(62, 455, 682, 36, 40, 32, BRIGHT, 4, 9)} />
            <Rects data={speckle(63, 518, 935, 32, 40, 32, BRIGHT, 4, 9)} />
            <Rects data={speckle(64, 558, 918, 55, 24, 30, BRIGHT, 3, 8)} />
            <Rects data={speckle(65, 706, 1095, 54, 18, 34, ["#ddd1bb", "#8c8270", "#454438"], 4, 9)} />
            <Rects data={speckle(66, 345, 68, 130, 122, 150, ["#d3b18a", "#b09370", "#c5a27c", "#b99a77"], 3, 9)} />
            <Rects data={speckle(73, 475, 135, 85, 55, 90, ["#d3b18a", "#b99a77", "#c5a27c"], 3, 9)} />
            <Rects data={speckle(67, 478, 62, 34, 65, 35, ["#294c3e", "#203f35"], 6, 14)} />
            <Rects data={speckle(68, 866, 1130, 50, 45, 28, BRIGHT, 4, 9)} />
            <Rects data={speckle(69, 120, 412, 24, 20, 12, BRIGHT, 3, 7)} />
            <Rects data={speckle(70, 470, 482, 48, 20, 16, BRIGHT, 4, 8)} />
            <Rects data={speckle(71, 135, 52, 25, 16, 12, BRIGHT, 3, 7)} />
            <Rects data={speckle(72, 945, 785, 12, 32, 9, ["#ddd1bb", "#18302a"], 4, 8)} />
            <rect x="766" y="420" width="28" height="27" fill="#1e4330" stroke="#bdb291" strokeWidth="5" />
            <path d="M945 1090l25-10 12 14-18 18z" fill="#a59c8a" />
          </g>
        </g>
        <rect x="265" y="0" width="1160" height="405" filter="url(#grain)" opacity="0.22" />
      </g>
      <path
        d="M844.500 40.500C843.800 30.500 841.500 26.500 837 21.500C834 18 832 15 832 10.500A12.500 12.500 0 0 1 857 10.500C857 15 855 18 852 21.500C847.500 26.500 845.200 30.500 844.500 40.500Z"
        fill="#fe2a10"
        stroke="#fff"
        strokeWidth="1.300"
      />
      <circle cx="844.500" cy="11.500" r="4.600" fill="#7d0602" />
    </svg>
  );
}

function Flag() {
  return (
    <svg viewBox="0 0 28 19" className="h-[19px] w-7">
      <rect width="28" height="19" fill="#fff" />
      {[3, 7, 11, 13.200, 17].map((y, i) => (
        <rect key={y} y={y} width="28" height={i === 3 ? 1 : 2} fill="#fb0a0a" />
      ))}
      <rect width="14" height="10.500" fill="#3c50b4" />
      {[2.500, 5.500, 8.500, 11.500].map((x) =>
        [2, 4.300, 6.600, 8.900].map((y) => <rect key={`${x}-${y}`} x={x - 0.5} y={y - 0.5} width="1" height="1" fill="#c9d2f4" />)
      )}
    </svg>
  );
}

function Pegman() {
  return (
    <svg viewBox="0 0 18 31" className="h-[31px] w-[18px]" stroke="#8b7a4a" strokeWidth="0.800">
      <path
        d="M5.500 10.500H12.500C14.200 10.500 14.700 11.500 15 13L17 20.500L14.600 21.800L13.300 19V30H9.800V23.500H8.200V30H4.700V19L3.400 21.800L1 20.500L3 13C3.300 11.500 3.800 10.500 5.500 10.500Z"
        fill="#fbbc04"
      />
      <path d="M4.800 11L9 16L13.200 11Z" fill="#f28b0c" stroke="none" />
      <circle cx="9" cy="5.800" r="5" fill="#fbbc04" />
    </svg>
  );
}

function MapView() {
  return (
    <section className="relative mx-3 h-[405px] w-[1160px] shrink-0 overflow-hidden bg-[#26544a]">
      <Satellite />
      <div className="absolute left-1.5 top-[379px] font-['Lato',sans-serif] text-[20px] font-bold leading-6 tracking-[-0.1px] text-white">
        Google
      </div>
      <div className="absolute bottom-0 right-0 flex h-3.5 gap-px font-['Roboto',sans-serif] text-[10px] leading-[14px] text-[#444]">
        <span className="w-[239px] whitespace-nowrap bg-[#f5f5f5]/70 pl-[5px]">Imagery ©2020 CNES / Airbus, Maxar Technologies</span>
        <span className="w-[70px] whitespace-nowrap bg-[#f5f5f5]/70 pl-[4.5px]">Terms of Use</span>
        <span className="w-[94px] whitespace-nowrap bg-[#f5f5f5]/70 pl-[4.5px]">Report a map error</span>
      </div>
      <button className="absolute right-2.5 top-[228px] flex size-10 items-center justify-center rounded-[2px] bg-white shadow">
        <Pegman />
      </button>
      <div className="absolute right-2.5 top-[300px] flex h-[81px] w-10 flex-col items-center rounded-[2px] bg-white text-[#666] shadow">
        <button className="flex h-10 w-full items-center justify-center">
          <svg viewBox="0 0 18 18" className="size-[18px]" fill="currentColor">
            <path d="M7 0h4v7h7v4h-7v7H7v-7H0V7h7z" />
          </svg>
        </button>
        <div className="h-px w-[30px] bg-[#e6e6e6]" />
        <button className="flex h-10 w-full items-center justify-center">
          <svg viewBox="0 0 18 4" className="h-1 w-[18px]" fill="currentColor">
            <path d="M0 0h18v4H0z" />
          </svg>
        </button>
      </div>
    </section>
  );
}

const ROWS = ["18 Apr 2020 16:40", "18 Apr 2020 16:20", "18 Apr 2020 16:20", "18 Apr 2020 16:20", "18 Apr 2020 16:20"];

function Cell({ dark, center, children }: { dark?: boolean; center?: boolean; children?: React.ReactNode }) {
  return (
    <div
      className={
        "flex h-[54px] items-center border border-[#dcdcdc] px-2 " +
        (dark ? "bg-[#dcdcdc] " : "bg-[#f0f0f0] ") +
        (center ? "justify-center" : "")
      }
    >
      {children}
    </div>
  );
}

function Redactions() {
  return (
    <div className="pointer-events-none absolute inset-0">
      <div className="absolute left-[388px] top-[55px] h-[52px] w-[174px] rounded-[50%] bg-white" />
      <div className="absolute left-[628px] top-[57px] h-[52px] w-[175px] rounded-[50%] bg-white" />
      <div className="absolute left-[372px] top-[123px] h-[52px] w-[175px] rounded-[50%] bg-white" />
      <div className="absolute left-[620px] top-[115px] h-[52px] w-[174px] rounded-[50%] bg-white" />
      <div className="absolute left-[371px] top-[169px] h-[52px] w-[175px] rounded-[50%] bg-white" />
      <div className="absolute left-[631px] top-[169px] h-[52px] w-[175px] rounded-[50%] bg-white" />
      <div className="absolute left-[357px] top-[214px] h-[52px] w-[175px] rounded-[50%] bg-white" />
      <div className="absolute left-[623px] top-[227px] h-[52px] w-[174px] rounded-[50%] bg-white" />
      <div className="absolute left-[370px] top-[278px] h-[52px] w-[174px] rounded-[50%] bg-white" />
      <div className="absolute left-[629px] top-[289px] h-[53px] w-[175px] rounded-[50%] bg-white" />
    </div>
  );
}

function LocationTable() {
  return (
    <section className="relative ml-3.5 mt-[26px] w-[1156px] font-['Liberation_Sans',Arial,sans-serif] text-base text-[#212121]">
      <div className="grid grid-cols-[385px_266px_266px_233px] gap-0.5">
        <Cell>
          <b>Timestamp</b>
        </Cell>
        <Cell>
          <b>Latitude</b>
        </Cell>
        <Cell>
          <b>Longitude</b>
        </Cell>
        <Cell center>
          <Icon name="down" className="size-[23px] text-[#757575]" />
        </Cell>
        {ROWS.map((time, i) => (
          <React.Fragment key={i}>
            <Cell dark={i % 2 === 0}>{time}</Cell>
            <Cell dark={i % 2 === 0} />
            <Cell dark={i % 2 === 0} />
            <Cell dark={i % 2 === 0} center>
              <div className="mr-px flex gap-5 text-[#666]">
                <Icon name="addLocation" className="size-4" />
                <Icon name="navigation" className="size-4" />
              </div>
            </Cell>
          </React.Fragment>
        ))}
      </div>
      <Redactions />
    </section>
  );
}

export default function App() {
  return (
    <div className="relative flex h-[811px] w-[1437px] overflow-hidden bg-[#f0f0f0] font-['Lato',sans-serif]">
      <Sidebar />
      <main className="flex min-w-0 flex-1 flex-col">
        <MapView />
        <LocationTable />
        <footer className="mt-auto flex h-8 items-center justify-between bg-[#f5f5f5] px-4 pt-0.5 text-base tracking-[-0.1px] text-[#212121]">
          <span>© ® 2019 Hawkshaw</span>
          <span className="tracking-normal">AK | Redmi K20 Pro | Xiaomi</span>
        </footer>
      </main>
      <div className="absolute right-3 top-3 flex h-7 items-center text-black/60">
        <div className="mr-[21px]">
          <Flag />
        </div>
        <Icon name="download" className="mr-[19px] size-6" />
        <Icon name="forum" className="mr-[20px] size-7" />
        <Icon name="clock" className="mr-[20px] size-6" />
        <Icon name="account" className="size-7" />
      </div>
    </div>
  );
}
